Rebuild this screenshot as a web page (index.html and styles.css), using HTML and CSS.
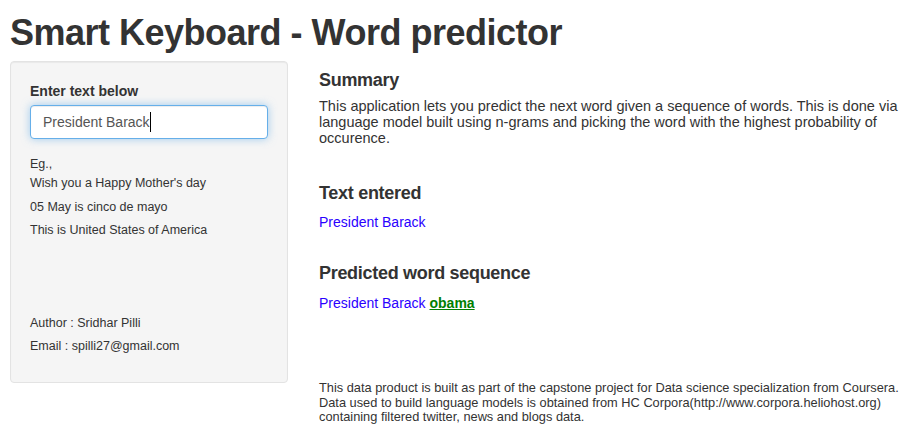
FILE: index.html
```html
<!DOCTYPE html>
<html>
<head>
<meta charset="utf-8">
<title>Smart Keyboard - Word predictor</title>
<link rel="stylesheet" href="styles.css">
</head>
<body>
<div class="page">
  <h1 class="title">Smart Keyboard - Word predictor</h1>
  <div class="layout">
    <aside class="well">
      <label class="field-label">Enter text below</label>
      <div class="text-input"><span>President Barack</span><span class="caret"></span></div>
      <p class="small eg">Eg.,</p>
      <p class="small ex1">Wish you a Happy Mother's day</p>
      <p class="small ex2">05 May is cinco de mayo</p>
      <p class="small ex3">This is United States of America</p>
      <p class="small author">Author : Sridhar Pilli</p>
      <p class="small email">Email : spilli27@gmail.com</p>
    </aside>
    <main class="main">
      <h4 class="heading first">Summary</h4>
      <p class="summary">This application lets you predict the next word given a sequence of words. This is done via language model built using n-grams and picking the word with the highest probability of occurence.</p>
      <h4 class="heading entered-h">Text entered</h4>
      <p class="line entered">President Barack</p>
      <h4 class="heading predicted-h">Predicted word sequence</h4>
      <p class="line predicted">President Barack <span class="next-word">obama</span></p>
      <p class="footer">This data product is built as part of the capstone project for Data science specialization from Coursera. Data used to build language models is obtained from HC Corpora(http://www.corpora.heliohost.org) containing filtered twitter, news and blogs data.</p>
    </main>
  </div>
</div>
</body>
</html>
```
FILE: styles.css
```css
html, body {
  margin: 0;
  padding: 0;
  background: #fff;
}
body {
  font-family: "Liberation Sans", Helvetica, Arial, sans-serif;
  font-size: 14px;
  color: #333;
}
.page {
  padding: 0 3px 0 10px;
}
.title {
  margin: 13px 0 8px;
  font-size: 36px;
  line-height: 40px;
  font-weight: bold;
  letter-spacing: -0.5px;
  color: #333;
}
.layout {
  display: grid;
  grid-template-columns: 278px 1fr;
  column-gap: 31px;
  align-items: start;
}
.well {
  background: #f5f5f5;
  border: 1px solid #e3e3e3;
  border-radius: 4px;
  box-shadow: inset 0 1px 1px rgba(0,0,0,.05);
  padding: 19px;
}
.field-label {
  display: block;
  font-weight: bold;
  line-height: 20px;
  margin-bottom: 4px;
}
.text-input {
  box-sizing: border-box;
  height: 34px;
  padding: 6px 12px;
  border: 1px solid #66afe9;
  border-radius: 4px;
  background: #fff;
  box-shadow: inset 0 1px 1px rgba(0,0,0,.075), 0 0 8px rgba(102,175,233,.6);
  color: #555;
  font-size: 14px;
  line-height: 20px;
  display: flex;
  align-items: center;
}
.caret {
  display: inline-block;
  width: 1px;
  height: 20px;
  background: #000;
}
.small {
  font-size: 12.5px;
  line-height: 13px;
  margin: 0;
  color: #333;
}
.eg { margin-top: 19px; }
.ex1 { margin-top: 6px; }
.ex2 { margin-top: 11px; }
.ex3 { margin-top: 10px; }
.author { margin-top: 80px; }
.email { margin-top: 10px; margin-bottom: 10px; }
.main {
  min-width: 0;
}
.heading {
  font-size: 18px;
  line-height: 20px;
  font-weight: bold;
  letter-spacing: -0.3px;
  margin: 0;
  color: #333;
}
.first { margin-top: 9px; }
.summary {
  margin: 8px 0 0;
  font-size: 14.5px;
  line-height: 16px;
}
.entered-h { margin-top: 37px; }
.line {
  font-size: 14px;
  line-height: 16px;
  margin: 0;
  color: #2a00ff;
}
.entered { margin-top: 11px; }
.predicted-h { margin-top: 33px; }
.predicted { margin-top: 12px; }
.next-word {
  color: #008000;
  font-weight: bold;
  text-decoration: underline;
}
.footer {
  margin: 70px 0 0;
  font-size: 12.8px;
  line-height: 14.5px;
}
```
